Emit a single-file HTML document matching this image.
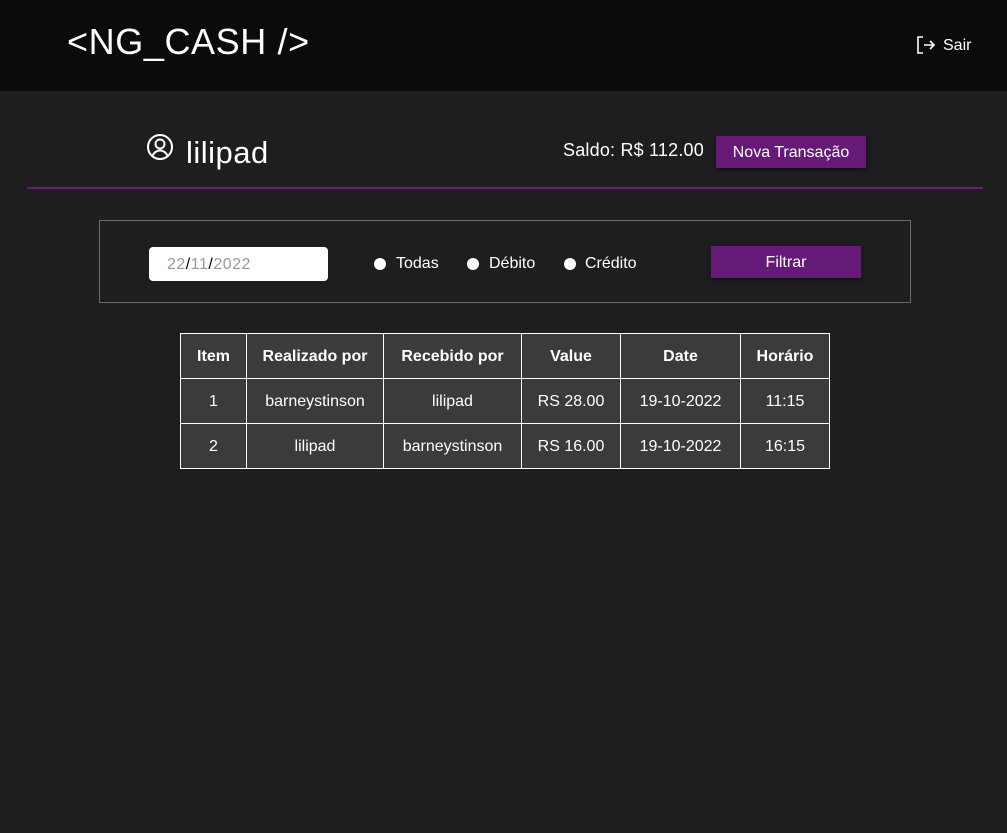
<!DOCTYPE html>
<html><head><meta charset="utf-8"><style>
*{margin:0;padding:0;box-sizing:border-box}
body{width:1007px;height:833px;background:#1e1e20;font-family:"Liberation Sans",sans-serif;color:#fff;position:relative;overflow:hidden}
.a{position:absolute;white-space:nowrap}
header{position:absolute;left:0;top:0;width:1007px;height:91px;background:#0b0b0b}
table{position:absolute;left:180px;top:333px;border-collapse:collapse;font-size:16px}
td,th{border:1px solid #fff;background:#3b3b3d;text-align:center;height:45px;padding:2px 0 0}
th{font-weight:bold}
.r{width:12px;height:12px;border-radius:50%;background:#fff;position:absolute}
</style></head><body>
<header>
<div class="a" style="left:67px;top:21px;font-size:36px;letter-spacing:0.6px">&lt;NG_CASH /&gt;</div>
<svg class="a" style="left:916px;top:35px" width="20" height="20" viewBox="0 0 20 20" fill="none" stroke="#fff" stroke-width="1.6"><path d="M7 2H2v16h5M8 10h10M14 6l4 4-4 4"/></svg>
<div class="a" style="left:943px;top:37px;font-size:16px">Sair</div>
</header>
<svg class="a" style="left:146px;top:133px" width="28" height="28" viewBox="0 0 28 28" fill="none" stroke="#fff" stroke-width="2"><circle cx="14" cy="14" r="12"/><circle cx="14" cy="11" r="4.5"/><path d="M6.5 22.5c2-3.5 4.5-5 7.5-5s5.5 1.5 7.5 5"/></svg>
<div class="a" style="left:186px;top:135px;font-size:31px;letter-spacing:0.5px">lilipad</div>
<div class="a" style="left:563px;top:140px;font-size:18px;letter-spacing:0.2px">Saldo: R$ 112.00</div>
<div class="a" style="left:716px;top:136px;width:150px;height:32px;background:#651a78;font-size:16px;text-align:center;line-height:34px;box-shadow:0 2px 4px rgba(0,0,0,.5)">Nova Transação</div>
<div class="a" style="left:27px;top:187px;width:956px;height:2px;background:#6a1b7d"></div>
<div class="a" style="left:99px;top:220px;width:812px;height:83px;border:1px solid #6b6b6b"></div>
<div class="a" style="left:149px;top:247px;width:179px;height:34px;background:#fff;border-radius:4px;color:#999;font-size:16px;line-height:36px;padding-left:18px;letter-spacing:0.5px">22<span style="color:#000">/</span>11<span style="color:#000">/</span>2022</div>
<div class="r" style="left:374px;top:258px"></div><div class="a" style="left:396px;top:255px;font-size:16px">Todas</div>
<div class="r" style="left:467px;top:258px"></div><div class="a" style="left:489px;top:255px;font-size:16px">Débito</div>
<div class="r" style="left:564px;top:258px"></div><div class="a" style="left:585px;top:255px;font-size:16px">Crédito</div>
<div class="a" style="left:711px;top:246px;width:150px;height:32px;background:#651a78;font-size:16px;text-align:center;line-height:34px;box-shadow:0 2px 4px rgba(0,0,0,.5)">Filtrar</div>
<table>
<tr><th style="width:66px">Item</th><th style="width:137px">Realizado por</th><th style="width:138px">Recebido por</th><th style="width:99px">Value</th><th style="width:120px">Date</th><th style="width:89px">Horário</th></tr>
<tr><td>1</td><td>barneystinson</td><td>lilipad</td><td>RS 28.00</td><td>19-10-2022</td><td>11:15</td></tr>
<tr><td>2</td><td>lilipad</td><td>barneystinson</td><td>RS 16.00</td><td>19-10-2022</td><td>16:15</td></tr>
</table>
</body></html>
